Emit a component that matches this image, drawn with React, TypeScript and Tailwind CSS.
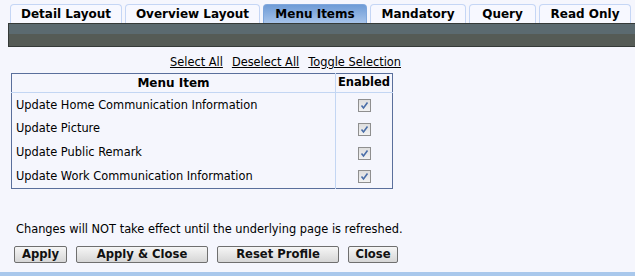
import React from "react";

const TABS = [
  { label: "Detail Layout", w: "w-[112px]" },
  { label: "Overview Layout", w: "w-[135px]" },
  { label: "Menu Items", w: "w-[104px]", active: true },
  { label: "Mandatory", w: "w-[96px]" },
  { label: "Query", w: "w-[67px]" },
  { label: "Read Only", w: "w-[92px]" },
];

const ITEMS = [
  "Update Home Communication Information",
  "Update Picture",
  "Update Public Remark",
  "Update Work Communication Information",
];

function CheckBox() {
  return (
    <span className="inline-flex h-[13px] w-[13px] items-center justify-center border border-[#8f8f8f] bg-gradient-to-b from-[#dedede] to-[#f2f2f2]">
      <svg width="9" height="9" viewBox="0 0 9 9">
        <path d="M1.5 4.5 L3.5 7 L7.5 1.5" fill="none" stroke="#4a6ea8" strokeWidth="1.6" />
      </svg>
    </span>
  );
}

function Button({ label, w }: { label: string; w: string }) {
  return (
    <button
      className={`${w} h-[17px] rounded-[2px] border border-[#6f6f6f] bg-gradient-to-b from-[#f6f6f6] to-[#d6d6d6] text-[11.6px] font-bold leading-none text-[#111]`}
    >
      {label}
    </button>
  );
}

export default function App() {
  return (
    <div className="flex h-[276px] w-[635px] flex-col overflow-hidden bg-[#f5f6fd] font-['Verdana','DejaVu_Sans',sans-serif] text-[11.4px] text-black">
      <div className="flex gap-[3px] pl-[10px] pt-[4px]">
        {TABS.map((t) => (
          <div
            key={t.label}
            className={`${t.w} flex h-[19px] items-center justify-center rounded-t-[4px] border border-b-0 pb-[1px] text-[12px] font-bold ${
              t.active
                ? "border-[#7ea6dc] bg-gradient-to-b from-[#6e9bd6] to-[#a6c3ea]"
                : "border-[#c5d6f5] bg-[#f7f8ff]"
            }`}
          >
            {t.label}
          </div>
        ))}
      </div>

      <div className="ml-[8px] flex h-[24px] flex-col border-b border-l border-t border-[#353a38]">
        <div className="h-[10px] bg-[#5b6a70]" />
        <div className="flex-1 bg-[#555b56]" />
      </div>

      <div className="mt-[9px] flex w-[401px] justify-end gap-[9px] leading-[13px]">
        <a className="underline">Select All</a>
        <a className="underline">Deselect All</a>
        <a className="underline">Toggle Selection</a>
      </div>

      <table className="ml-[11px] mt-[4px] w-[382px] border-collapse border border-[#5a6f9c]">
        <thead>
          <tr className="h-[19px] border-b border-[#c3d6f3]">
            <th className="w-[324px] border-r border-[#c3d6f3] text-center text-[12px] font-bold">Menu Item</th>
            <th className="text-center text-[11.5px] font-bold">Enabled</th>
          </tr>
        </thead>
        <tbody>
          {ITEMS.map((item) => (
            <tr key={item} className="h-[24px]">
              <td className="border-r border-[#c3d6f3] pl-[4px] pt-[1px]">{item}</td>
              <td className="text-center align-middle">
                <div className="flex justify-center pt-[1px]">
                  <CheckBox />
                </div>
              </td>
            </tr>
          ))}
        </tbody>
      </table>

      <p className="ml-[16px] mt-[34px] leading-[13px]">
        Changes will NOT take effect until the underlying page is refreshed.
      </p>

      <div className="ml-[14px] mt-[10px] flex gap-[9px]">
        <Button label="Apply" w="w-[53px]" />
        <Button label="Apply & Close" w="w-[132px]" />
        <Button label="Reset Profile" w="w-[122px]" />
        <Button label="Close" w="w-[50px]" />
      </div>

      <div className="mt-auto h-[4px] bg-[#a9c8ec]" />
    </div>
  );
}
